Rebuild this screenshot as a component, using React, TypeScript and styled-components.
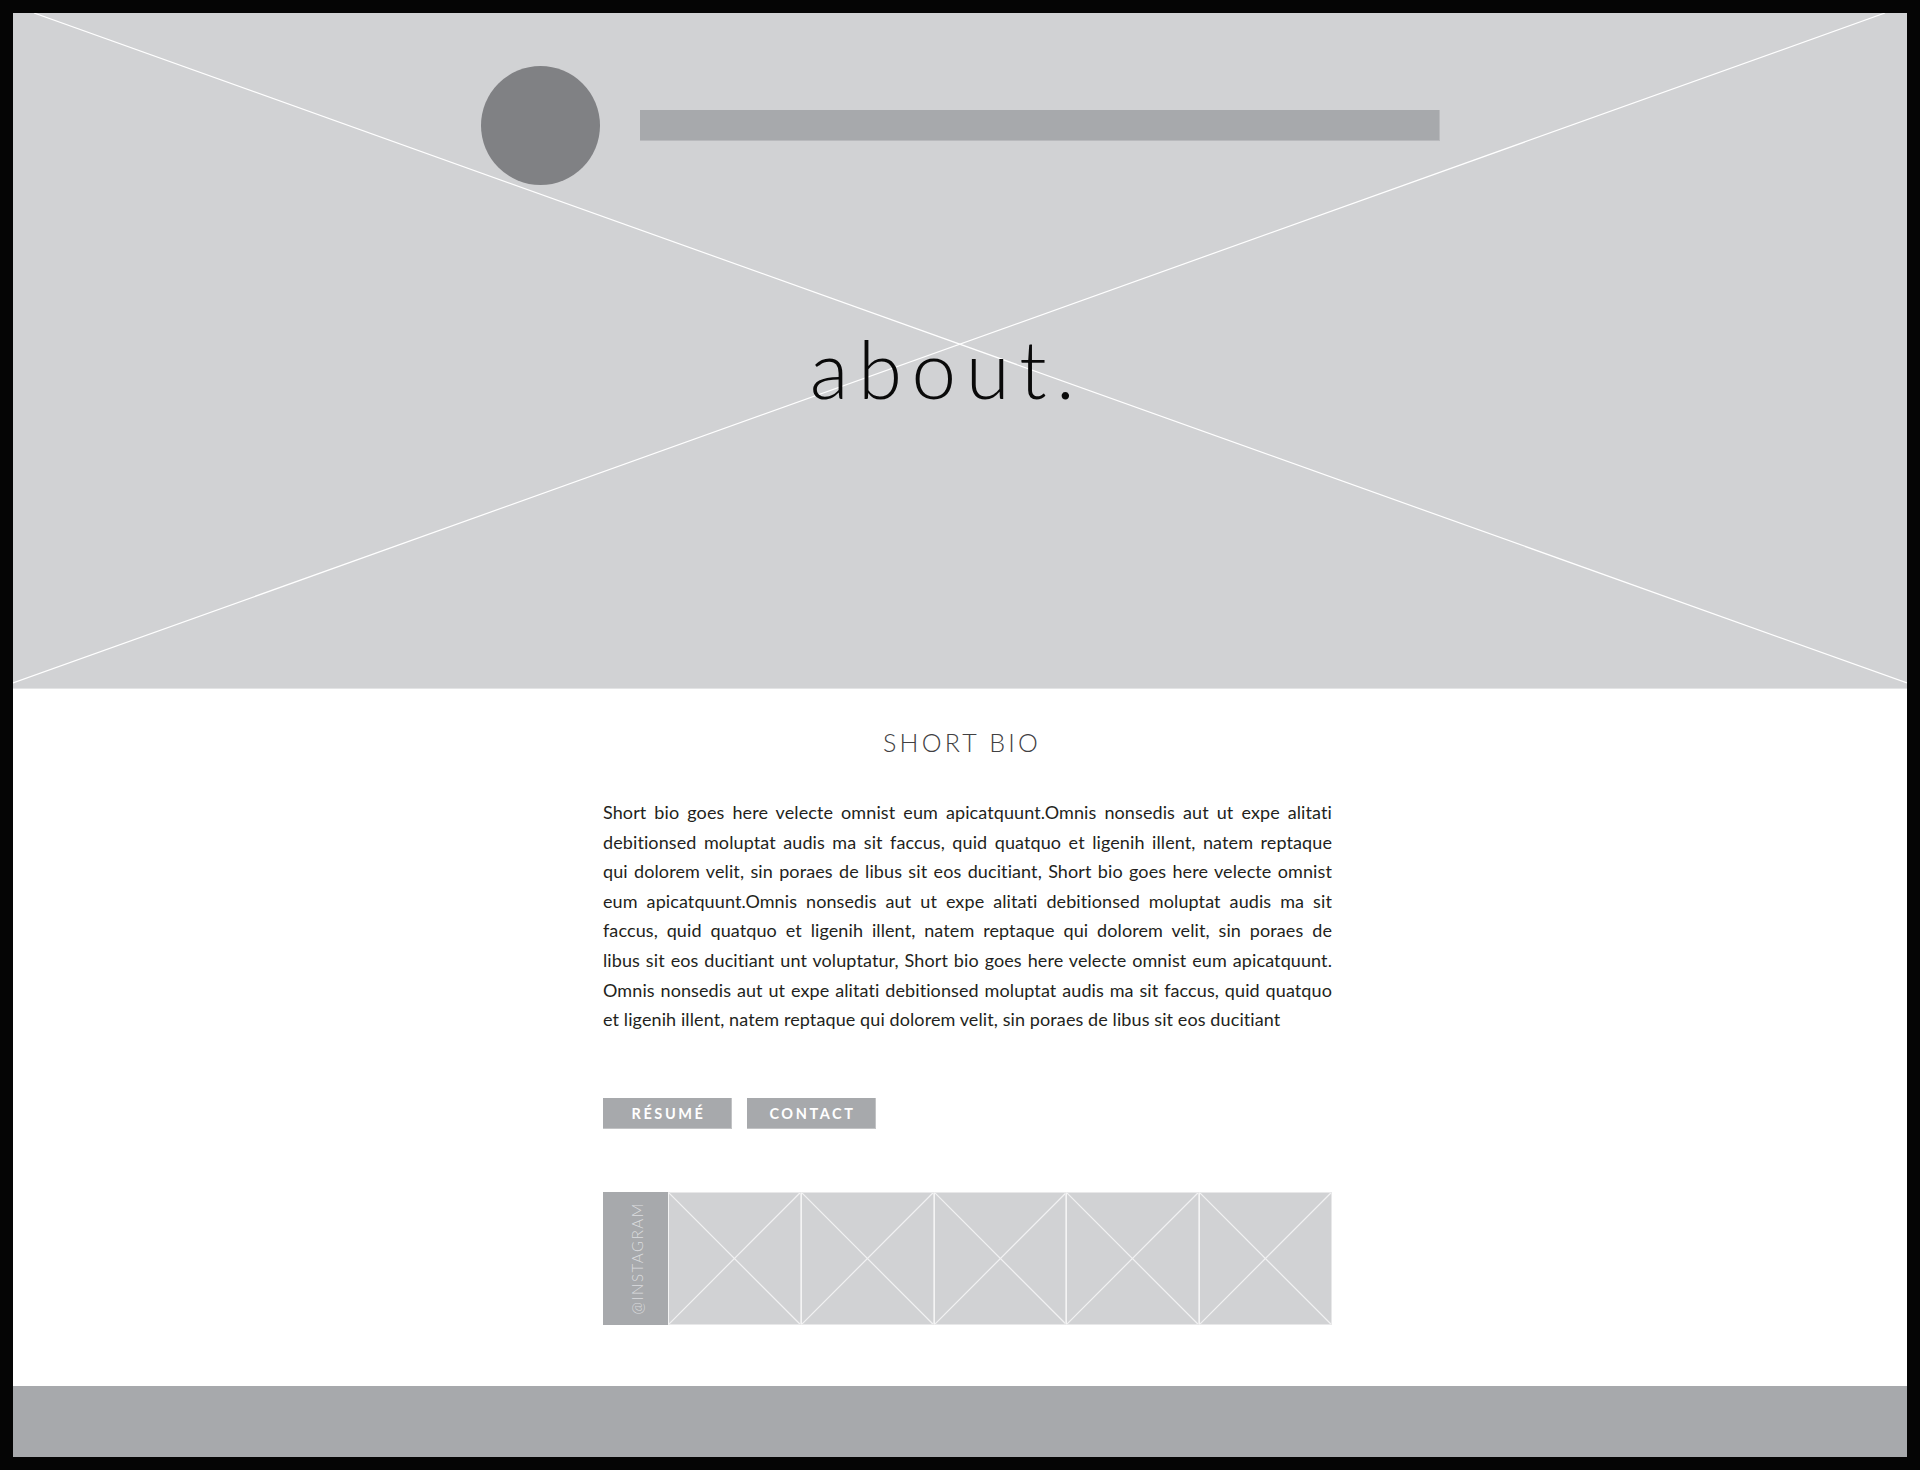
import React from "react";
import styled, { createGlobalStyle } from "styled-components";

const GlobalStyle = createGlobalStyle`
  html, body { margin: 0; padding: 0; background: #050505; }
  body { font-family: "Lato", "Liberation Sans", sans-serif; }
  * { box-sizing: border-box; }
`;

const Frame = styled.div`
  width: 1920px;
  height: 1470px;
  padding: 13px;
  background: #050505;
`;

const Page = styled.div`
  width: 1894px;
  height: 1444px;
  display: flex;
  flex-direction: column;
  background: #ffffff;
`;

const Hero = styled.header`
  position: relative;
  height: 676px;
  flex: none;
  background: #d1d2d4;
  border-bottom: 1px solid #e3e4e5;
  display: flex;
  flex-direction: column;
  align-items: center;
  padding-top: 53px;
`;

const HeroCross = styled.svg`
  position: absolute;
  inset: 0;
  width: 100%;
  height: 675px;
  pointer-events: none;
`;

const TopRow = styled.div`
  position: relative;
  display: flex;
  align-items: center;
  gap: 40px;
`;

const Avatar = styled.div`
  width: 119px;
  height: 119px;
  border-radius: 50%;
  background: #808184;
`;

const TitleBar = styled.div`
  width: 800px;
  height: 31px;
  background: #a7a9ac;
  box-shadow: inset -1px -1px 0 #b9babd;
`;

const HeroTitle = styled.h1`
  position: relative;
  margin: 143px 0 0;
  padding-right: 26px;
  font-family: "Lato", "Liberation Sans", sans-serif;
  font-weight: 300;
  font-size: 80px;
  line-height: 80px;
  letter-spacing: 9.5px;
  color: #0a0a0a;
`;

const Content = styled.main`
  flex: 1;
  display: flex;
  flex-direction: column;
  align-items: center;
  padding-top: 41px;
  padding-left: 15px;
`;

const Column = styled.div`
  width: 729px;
  display: flex;
  flex-direction: column;
`;

const SectionTitle = styled.h2`
  margin: 0 0 0 -15px;
  text-align: center;
  font-family: "Lato", "Liberation Sans", sans-serif;
  font-weight: 300;
  font-size: 25px;
  line-height: 25px;
  letter-spacing: 3.2px;
  color: #414042;
  padding-left: 4px;
`;

const Bio = styled.p`
  margin: 43px 0 0;
  font-family: "Lato", "Liberation Sans", sans-serif;
  font-weight: 400;
  font-size: 18px;
  line-height: 29.6px;
  letter-spacing: 0.1px;
  color: #231f20;
`;

const BioLine = styled.span<{ $last?: boolean }>`
  display: block;
  text-align: justify;
  text-align-last: ${(p) => (p.$last ? "left" : "justify")};
`;

const ButtonRow = styled.div`
  display: flex;
  gap: 15px;
  margin-top: 63px;
`;

const Button = styled.button`
  width: 129px;
  height: 31px;
  border: none;
  padding: 0 0 0 2px;
  background: #a7a9ac;
  box-shadow: inset -1px -1px 0 #c2c3c5;
  color: #ffffff;
  font-family: "Lato", "Liberation Sans", sans-serif;
  font-weight: 700;
  font-size: 14.5px;
  letter-spacing: 2.6px;
  cursor: pointer;
`;

const Insta = styled.div`
  display: flex;
  margin-top: 63px;
  height: 133px;
`;

const InstaLabel = styled.div`
  width: 65px;
  height: 133px;
  background: #a7a9ac;
  display: flex;
  align-items: center;
  justify-content: center;
  padding-left: 4px;
`;

const InstaText = styled.span`
  writing-mode: vertical-rl;
  transform: rotate(180deg);
  font-family: "Lato", "Liberation Sans", sans-serif;
  font-weight: 300;
  font-size: 15px;
  letter-spacing: 1.6px;
  color: #dcdddf;
`;

const Tile = styled.div`
  width: 133px;
  height: 133px;
  background: #d1d2d4;
  border: 1px solid #e8e8e9;
  border-left-color: #f4f4f4;
`;

const TileCross = styled.svg`
  display: block;
  width: 100%;
  height: 100%;
`;

const Footer = styled.footer`
  height: 71px;
  flex: none;
  background: #a7a9ac;
`;

const bioLines = [
  "Short bio goes here velecte omnist eum apicatquunt.Omnis nonsedis aut ut expe alitati",
  "debitionsed moluptat audis ma sit faccus, quid quatquo et ligenih illent, natem reptaque",
  "qui dolorem velit, sin poraes de libus sit eos ducitiant, Short bio goes here velecte omnist",
  "eum apicatquunt.Omnis nonsedis aut ut expe alitati debitionsed moluptat audis ma sit",
  "faccus, quid quatquo et ligenih illent, natem reptaque qui dolorem velit, sin poraes de",
  "libus sit eos ducitiant unt voluptatur, Short bio goes here velecte omnist eum apicatquunt.",
  "Omnis nonsedis aut ut expe alitati debitionsed moluptat audis ma sit faccus, quid quatquo",
  "et ligenih illent, natem reptaque qui dolorem velit, sin poraes de libus sit eos ducitiant",
];

export default function App() {
  return (
    <>
      <GlobalStyle />
      <Frame>
        <Page>
          <Hero>
            <HeroCross viewBox="0 0 1894 675" preserveAspectRatio="none">
              <line x1="21" y1="0" x2="1894" y2="670" stroke="#ffffff" strokeWidth="1.2" />
              <line x1="0" y1="670" x2="1872" y2="0" stroke="#ffffff" strokeWidth="1.2" />
            </HeroCross>
            <TopRow>
              <Avatar />
              <TitleBar />
            </TopRow>
            <HeroTitle>about.</HeroTitle>
          </Hero>
          <Content>
            <Column>
              <SectionTitle>SHORT BIO</SectionTitle>
              <Bio>
                {bioLines.map((line, i) => (
                  <BioLine key={i} $last={i === bioLines.length - 1}>
                    {line}
                  </BioLine>
                ))}
              </Bio>
              <ButtonRow>
                <Button>RÉSUMÉ</Button>
                <Button>CONTACT</Button>
              </ButtonRow>
              <Insta>
                <InstaLabel>
                  <InstaText>@INSTAGRAM</InstaText>
                </InstaLabel>
                {[0, 1, 2, 3, 4].map((i) => (
                  <Tile key={i}>
                    <TileCross viewBox="0 0 131 131" preserveAspectRatio="none">
                      <line x1="0" y1="0" x2="131" y2="131" stroke="#f2f2f3" strokeWidth="1.2" />
                      <line x1="131" y1="0" x2="0" y2="131" stroke="#f2f2f3" strokeWidth="1.2" />
                    </TileCross>
                  </Tile>
                ))}
              </Insta>
            </Column>
          </Content>
          <Footer />
        </Page>
      </Frame>
    </>
  );
}
